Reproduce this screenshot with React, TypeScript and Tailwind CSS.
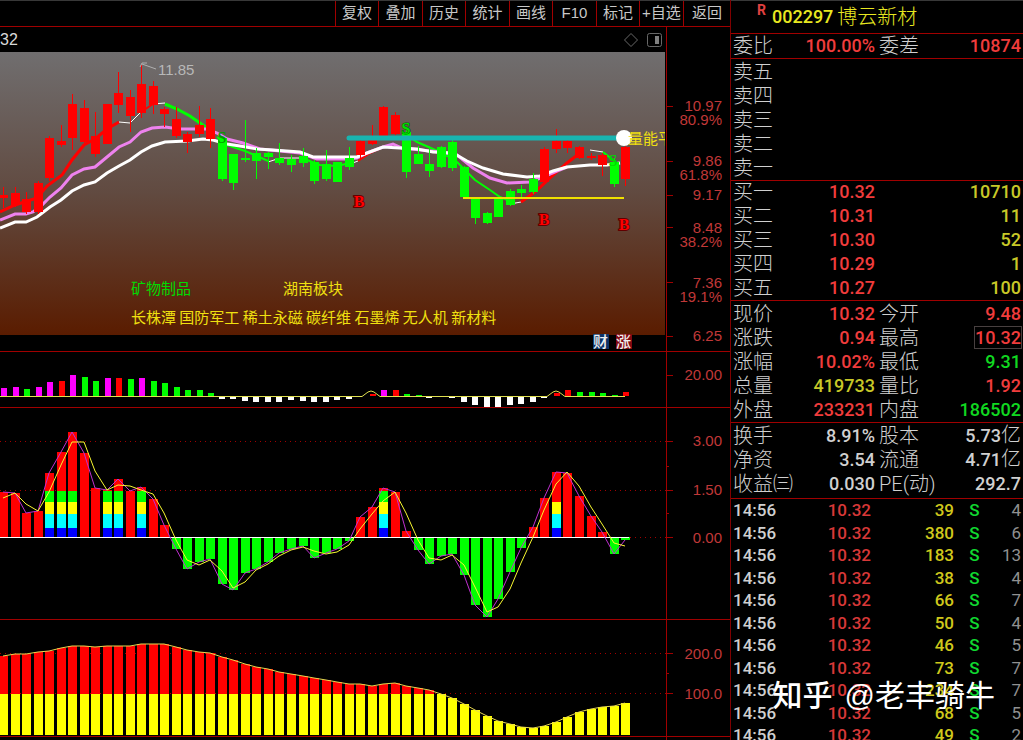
import clsx from "clsx"

const CJK = "font-['Liberation_Sans','Noto_Sans_CJK_SC',sans-serif]"
const NUM = "font-['Roboto','Noto_Sans_CJK_SC',sans-serif]"

const RED = "#ff0000"
const GREEN = "#00ff00"
const MAGENTA = "#ff00ff"
const WHITE = "#ffffff"
const AXIS = "#a00000"

const barX = (i: number) => Math.round(3 + 11.52 * i)

const toolbar = ["复权", "叠加", "历史", "统计", "画线", "F10", "标记", "+自选", "返回"]

// [high, body top, body bottom, low, color]
const candles: [number, number, number, number, "r" | "g"][] = [
  [187, 195, 198, 208, "r"], [187, 193, 205, 207, "r"], [192, 199, 212, 214, "r"], [181, 183, 212, 214, "r"],
  [136, 138, 178, 181, "r"], [125, 141, 145, 147, "r"], [94, 104, 138, 150, "r"], [100, 108, 142, 144, "r"],
  [112, 136, 154, 157, "r"], [104, 104, 144, 144, "r"], [72, 93, 105, 113, "r"], [90, 97, 116, 132, "r"],
  [65, 84, 113, 118, "r"], [81, 86, 105, 114, "r"], [107, 109, 114, 127, "r"], [107, 119, 136, 138, "r"],
  [132, 134, 142, 153, "r"], [106, 125, 134, 137, "r"], [108, 119, 139, 148, "r"], [137, 138, 179, 181, "g"],
  [154, 154, 183, 190, "g"], [120, 158, 160, 162, "g"], [148, 153, 161, 179, "g"], [152, 153, 157, 169, "g"],
  [143, 158, 163, 165, "g"], [155, 159, 165, 172, "g"], [148, 156, 163, 167, "g"], [160, 162, 181, 184, "g"],
  [150, 164, 179, 181, "g"], [162, 162, 182, 182, "g"], [147, 158, 167, 170, "g"], [140, 141, 155, 160, "r"],
  [125, 140, 144, 145, "r"], [106, 107, 136, 136, "r"], [112, 115, 134, 135, "r"], [130, 132, 172, 178, "g"],
  [146, 154, 164, 164, "g"], [149, 164, 171, 177, "g"], [146, 147, 167, 168, "g"], [138, 142, 168, 171, "g"],
  [166, 167, 197, 197, "g"], [197, 199, 218, 224, "g"], [212, 213, 223, 224, "g"], [197, 198, 217, 217, "g"],
  [189, 191, 205, 206, "g"], [185, 189, 193, 198, "g"], [173, 179, 192, 194, "g"], [147, 149, 182, 183, "r"],
  [129, 141, 149, 153, "r"], [140, 141, 148, 153, "r"], [146, 147, 158, 159, "r"], [153, 156, 158, 160, "r"],
  [153, 155, 165, 176, "r"], [158, 162, 184, 187, "g"], [146, 147, 179, 186, "r"],
]

const slowLine =
  "0,228 15,222 26,222 37,217 50,207 61,200 72,191 84,185 95,182 107,173 119,166 130,160 141,152 152,146 165,142 187,141 203,139 213,140 227,144 240,146 257,149 273,150 300,152 313,157 357,157 367,153 383,147 400,148 417,149 433,152 453,153 467,161 483,168 503,174 527,177 540,176 553,171 567,167 590,165 607,165 620,163"
const midLine =
  "0,220 15,214 26,214 33,212 42,205 50,197 61,188 72,175 84,169 95,167 107,157 119,147 130,142 141,132 152,128 165,127 180,129 207,129 217,133 227,139 243,143 260,149 300,153 317,159 350,159 357,158 367,153 383,147 393,144 402,148 440,152 457,155 473,168 490,178 507,183 530,182 543,177 557,171 567,167"

const fastLines: [string, string, number][] = [
  [RED, "0,212 15,205 37,198 47,186 62,175 72,160 84,145 95,139 107,129 119,122", 3],
  [WHITE, "119,122 130,123 141,112", 1],
  [RED, "141,112 153,104", 2],
  [WHITE, "153,104 165,103", 1],
  [GREEN, "165,104 177,109 190,116 207,128", 3],
  [GREEN, "217,137 227,145 245,151 257,156 268,161", 2],
  [WHITE, "268,162 280,158 300,158", 1],
  [GREEN, "302,158 320,165 337,166 350,163", 2],
  [WHITE, "350,164 358,161", 1],
  [RED, "358,161 370,153 383,147", 2],
  [GREEN, "402,132 417,142 440,152 455,160 463,168 475,180 490,190 500,197 510,201", 2],
  [WHITE, "510,204 521,202", 1],
  [RED, "521,202 535,192 550,178 567,163 580,153", 3],
  [WHITE, "590,150 603,152", 1],
  [GREEN, "603,152 613,160", 2],
]

// [edge y, color] measured from the zero line at 396
const volumeBars: [number, string][] = [
  [388, MAGENTA], [387, MAGENTA], [389, GREEN], [387, MAGENTA], [382, MAGENTA], [381, RED], [375, MAGENTA],
  [377, GREEN], [381, GREEN], [378, MAGENTA], [378, RED], [379, GREEN], [378, MAGENTA], [381, GREEN],
  [383, GREEN], [387, GREEN], [390, GREEN], [390, GREEN], [393, GREEN], [399, WHITE], [399, WHITE],
  [401, WHITE], [402, WHITE], [402, WHITE], [402, WHITE], [400, WHITE], [401, WHITE], [402, WHITE],
  [402, WHITE], [400, WHITE], [399, WHITE], [396, WHITE], [394, RED], [390, MAGENTA], [390, RED],
  [394, GREEN], [395, GREEN], [398, WHITE], [396, WHITE], [398, WHITE], [402, WHITE], [405, WHITE],
  [407, WHITE], [407, WHITE], [405, WHITE], [404, WHITE], [402, WHITE], [398, WHITE], [393, RED],
  [390, RED], [392, GREEN], [392, GREEN], [393, GREEN], [395, GREEN], [392, RED],
]

const momentum = [
  492, 493, 513, 511, 473, 452, 432, 453, 488, 490, 479, 491, 487, 499, 525, 549, 569, 562, 559, 584, 590, 573,
  569, 562, 553, 549, 546, 558, 553, 549, 541, 517, 507, 488, 492, 531, 550, 564, 556, 554, 575, 605, 617, 599,
  572, 548, 527, 498, 472, 473, 496, 516, 532, 554, 540,
]
const momentumAvg = [
  498, 493, 504, 511, 492, 465, 442, 442, 471, 490, 485, 486, 490, 494, 513, 540, 560, 565, 560, 571, 588, 582,
  570, 564, 556, 550, 547, 551, 554, 552, 545, 529, 514, 501, 492, 513, 540, 558, 560, 555, 565, 587, 612, 607,
  589, 563, 537, 510, 484, 472, 486, 507, 524, 543, 546,
]
const stacked = [4, 5, 6, 9, 10, 12, 33, 48]

const energy = [
  656, 654, 654, 652, 651, 648, 646, 646, 647, 646, 646, 646, 644, 644, 644, 647, 650, 652, 653, 657, 660, 664,
  667, 669, 672, 674, 676, 678, 680, 682, 684, 684, 686, 684, 683, 686, 688, 690, 694, 698, 704, 710, 716, 721,
  724, 727, 728, 726, 722, 717, 712, 709, 707, 706, 703,
]

const toPoints = (values: number[]) => values.map((y, i) => `${barX(i)},${y}`).join(" ")

function Axis({ top, bottom, labels, ticks }: {
  top: number
  bottom: number
  labels: [string, number][]
  ticks: number[]
}) {
  return (
    <g>
      <line x1={666.5} x2={666.5} y1={top} y2={bottom} stroke={AXIS} />
      {ticks.map((y) => (
        <line key={y} x1={666} x2={673} y1={y + 0.5} y2={y + 0.5} stroke={AXIS} />
      ))}
      {labels.map(([text, y]) => (
        <text key={text} x={722} y={y + 5} textAnchor="end" fontSize={15} fill="#c03838">
          {text}
        </text>
      ))}
    </g>
  )
}

function GridLines({ rows }: { rows: number[] }) {
  return (
    <g stroke="#a00000" strokeDasharray="1 4">
      {rows.map((y) => (
        <line key={y} x1={0} x2={666} y1={y + 0.5} y2={y + 0.5} />
      ))}
    </g>
  )
}

function PriceChart() {
  return (
    <svg viewBox="0 52 730 299" className="block w-full border-b border-[#a00000]">
      <defs>
        <linearGradient id="sky" x1="0" y1="0" x2="0" y2="1">
          <stop offset="0" stopColor="#706e6f" />
          <stop offset="0.5" stopColor="#614a40" />
          <stop offset="1" stopColor="#5a1c00" />
        </linearGradient>
        <clipPath id="plot">
          <rect x={0} y={52} width={665} height={299} />
        </clipPath>
      </defs>
      <rect x={0} y={52} width={665} height={283} fill="url(#sky)" />

      <g fill="none" strokeWidth={3}>
        {fastLines.map(([color, points, width]) => (
          <polyline key={points} points={points} stroke={color} strokeWidth={width} />
        ))}
        <polyline points={midLine} stroke="#ee82ee" />
        <polyline points={slowLine} stroke={WHITE} />
      </g>

      {candles.map(([high, top, bottom, low, c], i) => {
        const color = c === "r" ? RED : GREEN
        return (
          <g key={i} fill={color} shapeRendering="crispEdges">
            <rect x={barX(i)} y={high} width={1} height={low - high} />
            <rect x={barX(i) - 4} y={top} width={9} height={bottom - top} />
          </g>
        )
      })}

      <rect x={463} y={197} width={161} height={2} fill="#f0e000" shapeRendering="crispEdges" />
      <line x1={349} x2={620} y1={138} y2={138} stroke="#18b4b0" strokeWidth={5} strokeLinecap="round" />
      <circle cx={624} cy={138} r={8} fill={WHITE} />

      <g fontSize={16} fontWeight="bold" textAnchor="middle" fontFamily="Liberation Serif, serif">
        <text x={222} y={143} fill="#00a000">S</text>
        <text x={406} y={134} fill="#00e000" stroke="#006000" strokeWidth={1} paintOrder="stroke">S</text>
        <text x={613} y={166} fill="#00d800">S</text>
        <g fill="#ff0000" stroke="#600000" strokeWidth={2} paintOrder="stroke">
          <text x={359} y={207}>B</text>
          <text x={544} y={225}>B</text>
          <text x={624} y={230}>B</text>
        </g>
      </g>

      <path d="M156 69 L142 64 M140 67 L142 63 L147 63" fill="none" stroke="#b0b0b0" />
      <text x={158} y={75} fontSize={15} fill="#b8b8b8">11.85</text>

      <g fontSize={15} fill="#f0e010" fontFamily="Noto Sans CJK SC, sans-serif">
        <text x={628} y={144} clipPath="url(#plot)">量能平</text>
        <text x={131} y={294} fill="#00dc00">矿物制品</text>
        <text x={283} y={294}>湖南板块</text>
        <text x={131} y={323}>长株潭 国防军工 稀土永磁 碳纤维 石墨烯 无人机 新材料</text>
      </g>

      <rect x={593} y={334} width={16} height={15} fill="#0c3468" />
      <rect x={616} y={334} width={16} height={15} fill="#800810" />
      <g fontSize={15} fontWeight={500} fill="#f0f0f0">
        <text x={593} y={347}>财</text>
        <text x={616} y={347}>涨</text>
      </g>

      <Axis
        top={52}
        bottom={351}
        ticks={[106, 161, 195, 227, 282, 336]}
        labels={[
          ["10.97", 106], ["80.9%", 120], ["9.86", 161], ["61.8%", 175], ["9.17", 195],
          ["8.48", 228], ["38.2%", 242], ["7.36", 283], ["19.1%", 297], ["6.25", 336],
        ]}
      />
    </svg>
  )
}

function VolumeChart() {
  return (
    <svg viewBox="0 352 730 55" className="block w-full border-b border-[#a00000]">
      {volumeBars.map(([y, color], i) => (
        <rect
          key={i}
          x={barX(i) - (color === WHITE ? 3 : 2)}
          y={Math.min(y, 396)}
          width={6}
          height={Math.abs(y - 396)}
          fill={color}
          shapeRendering="crispEdges"
        />
      ))}
      <polyline
        points="0,396.5 362,396.5 368,392 371,391 374,392 380,396.5 547,396.5 553,392 556,391 559,392 565,396.5 625,396.5"
        fill="none"
        stroke="#e0e050"
      />
      <Axis top={352} bottom={407} ticks={[375]} labels={[["20.00", 375]]} />
    </svg>
  )
}

function MomentumChart() {
  return (
    <svg viewBox="0 408 730 211" className="block w-full border-b border-[#a00000]">
      <GridLines rows={[441, 490, 537]} />
      <g shapeRendering="crispEdges">
        {momentum.map((y, i) => (
          <rect
            key={i}
            x={barX(i) - 4}
            y={Math.min(y, 537)}
            width={9}
            height={Math.abs(y - 537)}
            fill={y < 537 ? RED : GREEN}
          />
        ))}
        {stacked.map((i) => (
          <g key={i}>
            {i !== 48 && <rect x={barX(i) - 4} y={491} width={9} height={11} fill={GREEN} />}
            <rect x={barX(i) - 4} y={502} width={9} height={12} fill="#ffff00" />
            <rect x={barX(i) - 4} y={514} width={9} height={14} fill="#00ffff" />
            <rect x={barX(i) - 4} y={528} width={9} height={10} fill="#0000ff" />
          </g>
        ))}
      </g>
      <line x1={0} x2={629} y1={537.5} y2={537.5} stroke={WHITE} />
      <polyline points={toPoints(momentum)} fill="none" stroke="#c030d0" />
      <polyline points={toPoints(momentumAvg)} fill="none" stroke="#f8f830" />
      <Axis
        top={408}
        bottom={619}
        ticks={[441, 490, 537]}
        labels={[["3.00", 441], ["1.50", 490], ["0.00", 538]]}
      />
      <path d="M666 466.5 h3 M666 513.5 h3" stroke={AXIS} />
    </svg>
  )
}

function EnergyChart() {
  return (
    <svg viewBox="0 620 730 120" className="block w-full">
      <GridLines rows={[653, 693]} />
      <g shapeRendering="crispEdges">
        {energy.map((y, i) => (
          <g key={i}>
            <rect x={barX(i) - 4} y={y} width={9} height={735 - y} fill={RED} />
            <rect x={barX(i) - 4} y={Math.max(y, 694)} width={9} height={735 - Math.max(y, 694)} fill="#ffff00" />
          </g>
        ))}
      </g>
      <polyline points={toPoints(energy)} fill="none" stroke="#e8d850" />
      <Axis top={620} bottom={740} ticks={[653, 693]} labels={[["200.0", 654], ["100.0", 694]]} />
      <path d="M666 673.5 h3 M0 736.5 H730" stroke={AXIS} />
    </svg>
  )
}

const tone = {
  red: "text-[#f03c3c]",
  green: "text-[#10d820]",
  yellow: "text-[#c8c828]",
  white: "text-[#d0d0d0]",
}
type Tone = keyof typeof tone
type Pair = [string, string, Tone]

const asks = ["卖五", "卖四", "卖三", "卖二", "卖一"]
const bids: [string, string, string][] = [
  ["买一", "10.32", "10710"],
  ["买二", "10.31", "11"],
  ["买三", "10.30", "52"],
  ["买四", "10.29", "1"],
  ["买五", "10.27", "100"],
]
const quote: [Pair, Pair][] = [
  [["现价", "10.32", "red"], ["今开", "9.48", "red"]],
  [["涨跌", "0.94", "red"], ["最高", "10.32", "red"]],
  [["涨幅", "10.02%", "red"], ["最低", "9.31", "green"]],
  [["总量", "419733", "yellow"], ["量比", "1.92", "red"]],
  [["外盘", "233231", "red"], ["内盘", "186502", "green"]],
]
const fundamentals: [Pair, Pair][] = [
  [["换手", "8.91%", "white"], ["股本", "5.73亿", "white"]],
  [["净资", "3.54", "white"], ["流通", "4.71亿", "white"]],
  [["收益㈢", "0.030", "white"], ["PE(动)", "292.7", "white"]],
]
const trades = [
  ["39", "4"], ["380", "6"], ["183", "13"], ["38", "4"], ["66", "7"], ["50", "4"],
  ["46", "5"], ["73", "7"], ["234", "7"], ["68", "5"], ["49", "2"],
]

function Value({ text, color, boxed }: { text: string; color: Tone; boxed?: boolean }) {
  const unit = text.endsWith("亿")
  return (
    <td className={clsx("p-0 pr-0.5 text-right font-medium", tone[color])}>
      <span className={clsx(boxed && "outline outline-[#484040]")}>{unit ? text.slice(0, -1) : text}</span>
      {unit && <span className="text-xl leading-none font-light">亿</span>}
    </td>
  )
}

function Label({ text }: { text: string }) {
  return (
    <th scope="row" className="p-0 pl-0.5 text-left text-xl leading-none font-light text-[#d0d0d0]">
      {text}
    </th>
  )
}

function PairTable({ rows, className }: { rows: [Pair, Pair][]; className?: string }) {
  return (
    <div className={clsx("border-b border-[#a00000]", className)}>
      <table className="w-full table-fixed border-collapse text-lg leading-5 whitespace-nowrap">
        <tbody>
          {rows.map(([a, b]) => (
            <tr key={a[0]} className="h-6">
              <Label text={a[0]} />
              <Value text={a[1]} color={a[2]} />
              <Label text={b[0]} />
              <Value text={b[1]} color={b[2]} boxed={b[0] === "最高"} />
            </tr>
          ))}
        </tbody>
      </table>
    </div>
  )
}

function OrderBook() {
  return (
    <table className="mt-px w-full table-fixed border-collapse text-lg leading-5 whitespace-nowrap">
      <tbody className="border-b border-[#a00000]">
        {asks.map((name) => (
          <tr key={name} className="h-6">
            <Label text={name} />
            <td />
            <td colSpan={2} />
          </tr>
        ))}
      </tbody>
      <tbody className="border-b border-[#a00000]">
        {bids.map(([name, price, volume]) => (
          <tr key={name} className="h-6">
            <Label text={name} />
            <Value text={price} color="red" />
            <td />
            <Value text={volume} color="yellow" />
          </tr>
        ))}
      </tbody>
    </table>
  )
}

function TradeTape() {
  return (
    <table className="w-full table-fixed border-collapse text-[17px] leading-[22px] whitespace-nowrap">
      <tbody>
        {trades.map(([volume, count], i) => (
          <tr key={i} className="h-[22px] odd:h-[23px]">
            <td className="w-[62px] p-0 pl-0.5 font-medium text-[#d0d0d0]">14:56</td>
            <td className="w-[78px] p-0 text-right font-medium text-[#d83838]">10.32</td>
            <td className="w-[83px] p-0 text-right font-medium text-[#d0c81c]">{volume}</td>
            <td className="w-[41px] p-0 text-center font-medium text-[#10d830]">S</td>
            <td className="p-0 pr-0.5 text-right text-[#909090]">{count}</td>
          </tr>
        ))}
      </tbody>
    </table>
  )
}

export default function App() {
  return (
    <div className={clsx("relative flex h-screen overflow-hidden bg-black", CJK)}>
      <main className="min-w-0 flex-1">
        <nav className="flex h-[27px] justify-end border-t border-b border-t-[#383838] border-b-[#a00000]">
          {toolbar.map((item) => (
            <button
              key={item}
              type="button"
              className="border-l border-[#a00000] text-[15px] whitespace-nowrap text-[#c8c8c8] odd:w-[43px] even:w-[44px] last:w-[47px]!"
            >
              {item}
            </button>
          ))}
        </nav>
        <div className="flex h-[25px]">
          <div className="flex flex-1 items-center justify-between border-r border-[#a00000] pr-1">
            <span className="text-base leading-5 text-[#d8d8d8]">32</span>
            <svg width="38" height="16" viewBox="0 0 38 16" fill="none" stroke="#686868">
              <path d="M7 1.5 L13.5 8 L7 14.5 L0.5 8 Z" />
              <rect x="23.5" y="1.5" width="14" height="13" rx="2" />
              <rect x="31" y="4" width="4" height="8" fill="#808080" stroke="none" />
            </svg>
          </div>
          <div className="w-[63px]" />
        </div>
        <PriceChart />
        <VolumeChart />
        <MomentumChart />
        <EnergyChart />
      </main>

      <aside className={clsx("w-[293px] shrink-0 border-l border-[#800000]", NUM)}>
        <h1 className="flex h-[34px] items-center border-t border-b border-t-[#383838] border-b-[#a00000] pl-[26px] text-[#e8e820]">
          <sup className="mr-1.5 text-sm font-bold text-[#e04040]">R</sup>
          <span className="mr-1 text-lg font-medium">002297</span>
          <span className="text-xl font-light">博云新材</span>
        </h1>
        <PairTable rows={[[["委比", "100.00%", "red"], ["委差", "10874", "red"]]]} />
        <OrderBook />
        <PairTable rows={quote} className="pt-px" />
        <PairTable rows={fundamentals} className="pt-px pb-0.5" />
        <TradeTape />
      </aside>

      <p className="absolute right-7 bottom-[22px] flex gap-3 text-[30px] leading-[44px] whitespace-nowrap text-white">
        <span className="font-medium">知乎</span>
        <span>@老丰骑牛</span>
      </p>
    </div>
  )
}
